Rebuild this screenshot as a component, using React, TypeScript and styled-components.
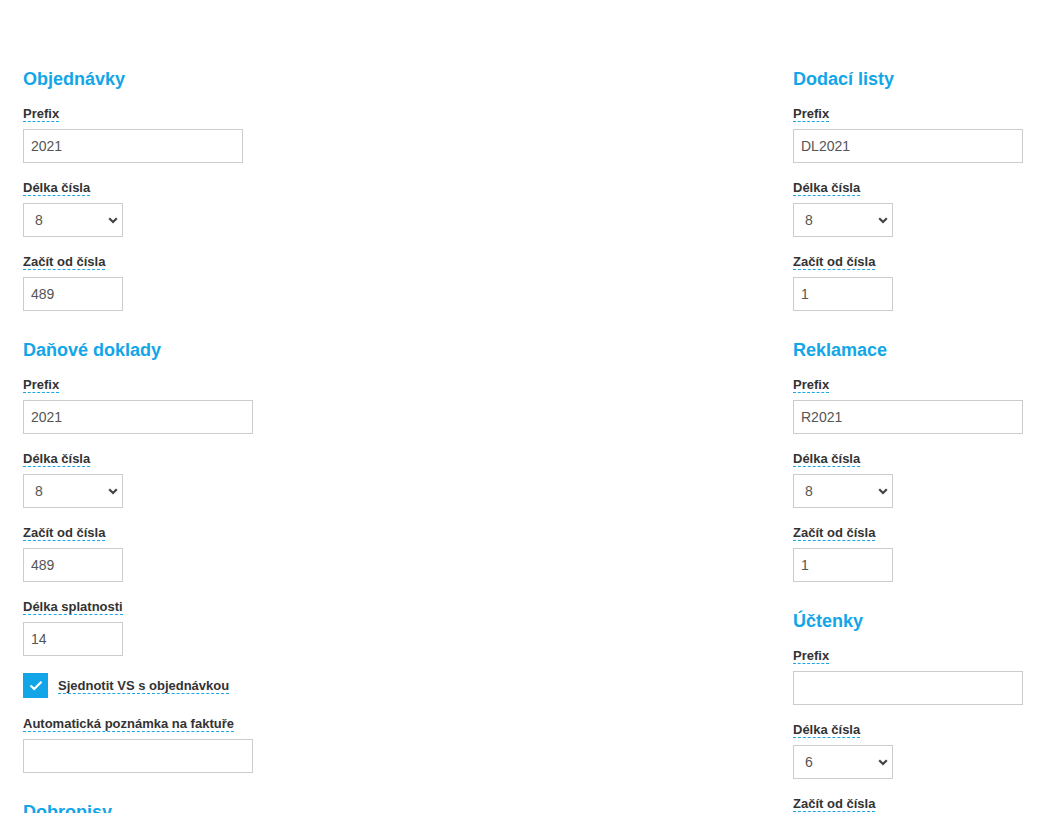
import React from 'react';
import styled, { createGlobalStyle } from 'styled-components';

const GlobalStyle = createGlobalStyle`
  html, body {
    margin: 0;
    padding: 0;
    background: #ffffff;
  }
  body {
    font-family: 'Liberation Sans', Arial, sans-serif;
    overflow: hidden;
  }
`;

const Page = styled.div`
  display: flex;
  justify-content: space-between;
  align-items: flex-start;
  padding: 68px 18px 0 23px;
  height: 813px;
  box-sizing: border-box;
  overflow: hidden;
`;

const Column = styled.div<{ $width: number }>`
  width: ${(p) => p.$width}px;
  display: flex;
  flex-direction: column;
`;

const Section = styled.section`
  & + & {
    margin-top: 11px;
  }
`;

const Heading = styled.h3`
  margin: 0 0 16px;
  font-size: 18px;
  line-height: 22px;
  font-weight: bold;
  color: #12a6e8;
`;

const Field = styled.div`
  margin-bottom: 17px;
`;

const LabelRow = styled.div`
  display: flex;
  margin-bottom: 7px;
`;

const Label = styled.label`
  display: inline-block;
  font-size: 13px;
  line-height: 15px;
  font-weight: bold;
  color: #333333;
  border-bottom: 1px dashed #1aa7e8;
`;

const TextInput = styled.input<{ $width: number }>`
  display: block;
  box-sizing: border-box;
  width: ${(p) => p.$width}px;
  height: 34px;
  margin: 0;
  padding: 0 7px;
  border: 1px solid #cccccc;
  border-radius: 0;
  font-family: 'Liberation Sans', Arial, sans-serif;
  font-size: 14px;
  color: #555555;
  background: #fff;
  outline: none;
`;

const SelectWrap = styled.div`
  position: relative;
  width: 100px;
  height: 34px;
`;

const Select = styled.select`
  appearance: none;
  -webkit-appearance: none;
  display: block;
  box-sizing: border-box;
  width: 100%;
  height: 34px;
  margin: 0;
  padding: 0 24px 0 11px;
  border: 1px solid #cccccc;
  border-radius: 0;
  background: #fff;
  font-family: 'Liberation Sans', Arial, sans-serif;
  font-size: 14px;
  color: #555555;
  outline: none;
`;

const Chevron = styled.svg`
  position: absolute;
  right: 5px;
  top: 14px;
  pointer-events: none;
`;

const CheckRow = styled.div`
  display: flex;
  align-items: center;
  gap: 10px;
  margin-bottom: 18px;
`;

const CheckBox = styled.span`
  display: flex;
  align-items: center;
  justify-content: center;
  width: 25px;
  height: 25px;
  background: #12a6e8;
`;

interface TextFieldProps {
  label: string;
  value: string;
  width: number;
}

const TextField: React.FC<TextFieldProps> = ({ label, value, width }) => (
  <Field>
    <LabelRow>
      <Label>{label}</Label>
    </LabelRow>
    <TextInput $width={width} defaultValue={value} />
  </Field>
);

const SelectField: React.FC<{ label: string; value: string }> = ({ label, value }) => (
  <Field>
    <LabelRow>
      <Label>{label}</Label>
    </LabelRow>
    <SelectWrap>
      <Select defaultValue={value}>
        {['4', '5', '6', '7', '8', '9', '10'].map((o) => (
          <option key={o} value={o}>
            {o}
          </option>
        ))}
      </Select>
      <Chevron width="10" height="7" viewBox="0 0 10 7">
        <path d="M1.2 1.2 L5 5 L8.8 1.2" fill="none" stroke="#444" strokeWidth="2.2" />
      </Chevron>
    </SelectWrap>
  </Field>
);

interface NumberingProps {
  title: string;
  prefix: string;
  length: string;
  start: string;
  prefixWidth?: number;
  children?: React.ReactNode;
}

const NumberingSection: React.FC<NumberingProps> = ({
  title,
  prefix,
  length,
  start,
  prefixWidth = 230,
  children,
}) => (
  <Section>
    <Heading>{title}</Heading>
    <TextField label="Prefix" value={prefix} width={prefixWidth} />
    <SelectField label="Délka čísla" value={length} />
    <TextField label="Začít od čísla" value={start} width={100} />
    {children}
  </Section>
);

export default function App() {
  return (
    <>
      <GlobalStyle />
      <Page>
        <Column $width={230}>
          <NumberingSection title="Objednávky" prefix="2021" length="8" start="489" prefixWidth={220} />
          <NumberingSection title="Daňové doklady" prefix="2021" length="8" start="489">
            <TextField label="Délka splatnosti" value="14" width={100} />
            <CheckRow>
              <CheckBox>
                <svg width="14" height="11" viewBox="0 0 14 11">
                  <path d="M1.5 5.5 L5.2 9 L12.5 1.8" fill="none" stroke="#fff" strokeWidth="2.2" />
                </svg>
              </CheckBox>
              <Label>Sjednotit VS s objednávkou</Label>
            </CheckRow>
            <TextField label="Automatická poznámka na faktuře" value="" width={230} />
          </NumberingSection>
          <Section>
            <Heading>Dobropisy</Heading>
          </Section>
        </Column>
        <Column $width={230}>
          <NumberingSection title="Dodací listy" prefix="DL2021" length="8" start="1" />
          <NumberingSection title="Reklamace" prefix="R2021" length="8" start="1" />
          <NumberingSection title="Účtenky" prefix="" length="6" start="" />
        </Column>
      </Page>
    </>
  );
}
